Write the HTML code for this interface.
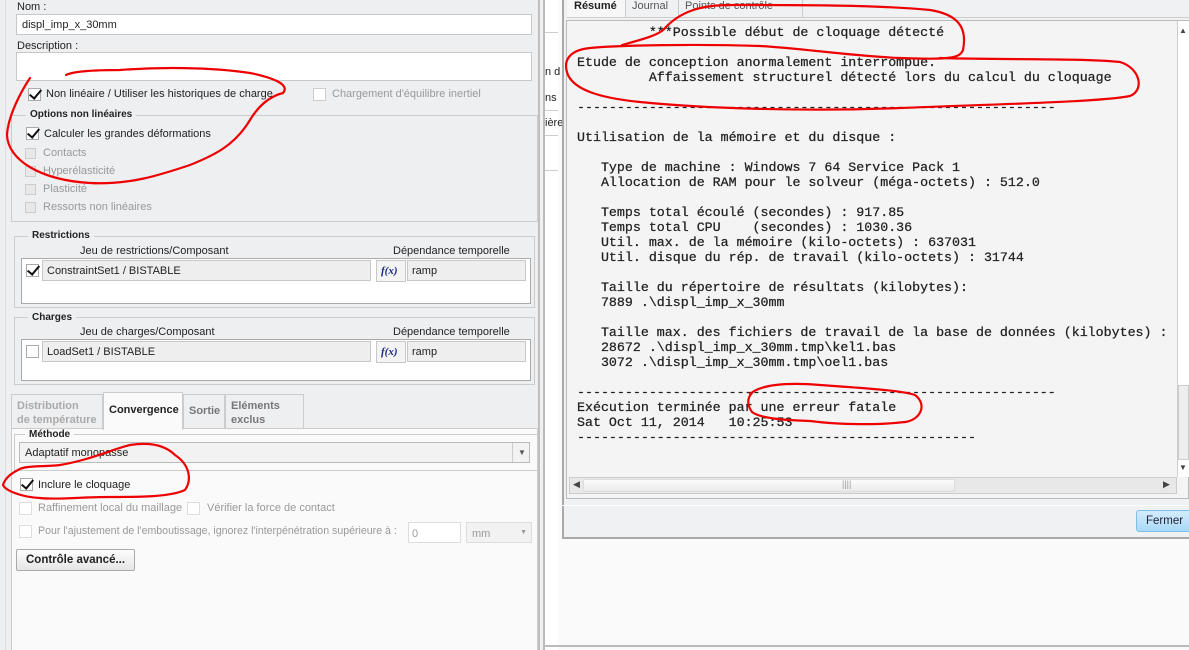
<!DOCTYPE html>
<html><head><meta charset="utf-8"><style>
*{margin:0;padding:0;box-sizing:border-box}
body{width:1189px;height:650px;overflow:hidden;background:#f0f0f0;position:relative;font-family:"Liberation Sans",sans-serif;font-size:11px;color:#222}
.a{position:absolute;white-space:nowrap}
.inp{position:absolute;background:#fff;border:1px solid #c8c8c8;white-space:nowrap}
.cb{position:absolute;width:13px;height:13px;border:1px solid #aaa;background:#fff}
.cbd{position:absolute;width:11px;height:11px;border:1px solid #ccc;background:#e8e8e8}
.chk::after{content:"";position:absolute;left:3px;top:-2px;width:5px;height:10px;border:solid #111;border-width:0 2.5px 2.5px 0;transform:rotate(40deg)}
.grp{position:absolute;border:1px solid #ccc}
.lg{position:absolute;background:#eeeff1;padding:0 4px;font-weight:bold;font-size:10px}
.dis{color:#999}
.mono{font-family:"Liberation Mono",monospace;font-size:13.3px;line-height:15px;color:#222;white-space:pre;position:absolute;left:577px;top:25px;-webkit-text-stroke:0.25px #222}
</style></head><body>
<div class="a" style="left:0;top:0;width:540px;height:650px;background:#eeeff1;border-right:2px solid #c0c0c0"></div>
<div class="a" style="left:5px;top:0;width:1px;height:650px;background:#ddd"></div>
<div class="a" style="left:17px;top:1px">Nom :</div>
<div class="inp" style="left:16px;top:14px;width:516px;height:21px;padding:4px 5px">displ_imp_x_30mm</div>
<div class="a" style="left:17px;top:40px">Description :</div>
<div class="inp" style="left:16px;top:52px;width:516px;height:29px"></div>
<div class="cb chk" style="left:28px;top:88px"></div>
<div class="a" style="left:46px;top:88px">Non linéaire / Utiliser les historiques de charge</div>
<div class="cb" style="left:313px;top:88px;border-color:#ccc"></div>
<div class="a dis" style="left:332px;top:88px">Chargement d'équilibre inertiel</div>
<div class="grp" style="left:11px;top:115px;width:527px;height:107px"></div>
<div class="lg" style="left:26px;top:109px">Options non linéaires</div>
<div class="cb chk" style="left:26px;top:127px"></div>
<div class="a" style="left:44px;top:128px">Calculer les grandes déformations</div>
<div class="cbd" style="left:25px;top:148px"></div><div class="a dis" style="left:43px;top:147px">Contacts</div>
<div class="cbd" style="left:25px;top:166px"></div><div class="a dis" style="left:43px;top:165px">Hyperélasticité</div>
<div class="cbd" style="left:25px;top:184px"></div><div class="a dis" style="left:43px;top:183px">Plasticité</div>
<div class="cbd" style="left:25px;top:202px"></div><div class="a dis" style="left:43px;top:201px">Ressorts non linéaires</div>

<div class="grp" style="left:14px;top:236px;width:521px;height:72px"></div>
<div class="lg" style="left:28px;top:230px">Restrictions</div>
<div class="a" style="left:80px;top:245px">Jeu de restrictions/Composant</div>
<div class="a" style="left:393px;top:245px">Dépendance temporelle</div>
<div class="inp" style="left:21px;top:258px;width:510px;height:46px;border-color:#aaa"></div>
<div class="cb chk" style="left:26px;top:264px"></div>
<div class="inp" style="left:42px;top:260px;width:329px;height:21px;background:#eee;padding:4px 4px">ConstraintSet1 / BISTABLE</div>
<div class="inp" style="left:376px;top:260px;width:30px;height:22px;background:#f4f4f4;font:italic bold 11px 'Liberation Serif',serif;color:#1a2a8a;padding:4px 4px">f(x)</div>
<div class="inp" style="left:407px;top:260px;width:119px;height:21px;background:#eee;padding:4px 4px">ramp</div>

<div class="grp" style="left:14px;top:317px;width:521px;height:68px"></div>
<div class="lg" style="left:28px;top:312px">Charges</div>
<div class="a" style="left:80px;top:326px">Jeu de charges/Composant</div>
<div class="a" style="left:393px;top:326px">Dépendance temporelle</div>
<div class="inp" style="left:21px;top:339px;width:510px;height:42px;border-color:#aaa"></div>
<div class="cb" style="left:26px;top:345px"></div>
<div class="inp" style="left:42px;top:341px;width:329px;height:21px;background:#eee;padding:4px 4px">LoadSet1 / BISTABLE</div>
<div class="inp" style="left:376px;top:341px;width:30px;height:22px;background:#f4f4f4;font:italic bold 11px 'Liberation Serif',serif;color:#1a2a8a;padding:4px 4px">f(x)</div>
<div class="inp" style="left:407px;top:341px;width:119px;height:21px;background:#eee;padding:4px 4px">ramp</div>

<div class="a" style="left:11px;top:428px;width:527px;height:222px;background:#fafafa;border:1px solid #ccc;border-bottom:none"></div>
<div class="a" style="left:11px;top:394px;width:92px;height:35px;border:1px solid #ccc;color:#aaa;font-weight:bold;padding:4px 5px;line-height:14px;font-size:11px">Distribution<br>de température</div>
<div class="a" style="left:103px;top:392px;width:80px;height:38px;background:#fafafa;border:1px solid #ccc;border-bottom:none;font-weight:bold;padding:11px 5px;font-size:11px">Convergence</div>
<div class="a" style="left:183px;top:394px;width:42px;height:35px;border:1px solid #ccc;color:#777;font-weight:bold;padding:10px 5px">Sortie</div>
<div class="a" style="left:225px;top:394px;width:79px;height:35px;border:1px solid #ccc;color:#777;font-weight:bold;padding:4px 5px;line-height:14px">Eléments<br>exclus</div>
<div class="grp" style="left:14px;top:434px;width:524px;height:37px"></div>
<div class="lg" style="left:25px;top:429px;background:#fafafa;font-size:10px">Méthode</div>
<div class="inp" style="left:19px;top:442px;width:511px;height:21px;background:#f2f2f2;border-color:#bbb;padding:4px 5px">Adaptatif monopasse</div>
<div class="a" style="left:512px;top:443px;width:18px;height:19px;border-left:1px solid #ccc;color:#555;font-size:8px;padding:5px 5px">▼</div>
<div class="cb chk" style="left:20px;top:478px"></div>
<div class="a" style="left:38px;top:479px">Inclure le cloquage</div>
<div class="cb" style="left:19px;top:502px;border-color:#ddd"></div><div class="a dis" style="left:38px;top:502px">Raffinement local du maillage</div>
<div class="cb" style="left:187px;top:502px;border-color:#ddd"></div><div class="a dis" style="left:207px;top:502px">Vérifier la force de contact</div>
<div class="cb" style="left:19px;top:525px;border-color:#ddd"></div><div class="a dis" style="left:38px;top:525px;font-size:10.6px">Pour l'ajustement de l'emboutissage, ignorez l'interpénétration supérieure à :</div>
<div class="inp" style="left:408px;top:522px;width:53px;height:21px;padding:5px 3px;color:#999;border-color:#ddd">0</div>
<div class="inp" style="left:466px;top:522px;width:66px;height:21px;padding:5px 5px;color:#999;background:#f2f2f2;border-color:#ddd">mm<span style="position:absolute;right:4px;top:6px;font-size:7px">▼</span></div>
<div class="a" style="left:16px;top:549px;width:119px;height:22px;border:1px solid #aaa;border-radius:2px;background:linear-gradient(#fdfdfd,#e6e6e6);font-weight:bold;padding:4px 9px;font-size:11.5px">Contrôle avancé...</div>

<div class="a" style="left:543px;top:0;width:646px;height:650px;background:#fafafa;border-left:2px solid #bbb"></div>
<div class="a" style="left:545px;top:0;width:13px;height:650px;background:#fff"></div>
<div class="a" style="left:545px;top:32px;width:13px;height:1px;background:#ccc"></div>
<div class="a" style="left:545px;top:110px;width:13px;height:1px;background:#ccc"></div>
<div class="a" style="left:545px;top:135px;width:13px;height:1px;background:#ccc"></div>
<div class="a" style="left:545px;top:170px;width:13px;height:1px;background:#ccc"></div>
<div class="a" style="left:545px;top:66px;font-size:11px">n d</div>
<div class="a" style="left:545px;top:92px;font-size:11px">ns</div>
<div class="a" style="left:545px;top:117px;font-size:11px">ière</div>
<div class="a" style="left:543px;top:645px;width:646px;height:2px;background:#bbb"></div>
<div class="a" style="left:562px;top:0;width:627px;height:539px;background:#f0f1f3;border:2px solid #a9a9a9;border-top:none;border-right:none"></div>
<div class="a" style="left:567px;top:0;width:59px;height:17px;background:#f7f7f7;border-right:1px solid #ccc;font-weight:bold;padding:0 7px;font-size:11px">Résumé</div>
<div class="a" style="left:626px;top:0;width:53px;height:17px;border-right:1px solid #ccc;color:#555;padding:0 6px">Journal</div>
<div class="a" style="left:679px;top:0;width:124px;height:17px;border-right:1px solid #ccc;color:#555;padding:0 6px">Points de contrôle</div>
<div class="a" style="left:567px;top:17px;width:622px;height:1px;background:#ccc"></div>
<div class="a" style="left:566px;top:20px;width:623px;height:479px;background:#f4f4f4;border:1px solid #bbb"></div>
<div class="a" style="left:1177px;top:21px;width:12px;height:456px;background:#fff;border-left:1px solid #ccc"></div>
<div class="a" style="left:1179px;top:26px;font-size:8px;color:#444">▲</div>
<div class="a" style="left:1179px;top:463px;font-size:8px;color:#444">▼</div>
<div class="a" style="left:1178px;top:385px;width:11px;height:75px;background:#eee;border:1px solid #ccc"></div>
<div class="a" style="left:569px;top:477px;width:608px;height:17px;background:#e8e8e8;border:1px solid #ccc"></div>
<div class="a" style="left:573px;top:479px;font-size:9px;color:#444">◀</div>
<div class="a" style="left:1163px;top:479px;font-size:9px;color:#444">▶</div>
<div class="a" style="left:583px;top:479px;width:372px;height:13px;background:linear-gradient(#fcfcfc,#eaeaea);border:1px solid #ddd"></div>
<div class="a" style="left:842px;top:479px;font-size:9px;color:#999">||||</div>
<div class="a" style="left:562px;top:505px;width:627px;height:1px;background:#fff"></div>
<div class="a" style="left:1136px;top:510px;width:60px;height:22px;background:linear-gradient(#d3ecfb,#a9d9f7);border:1px solid #7cc0ea;border-radius:3px;padding:4px 9px;font-size:11.5px;color:#223">Fermer</div>
<div class="mono">         ***Possible début de cloquage détecté

Etude de conception anormalement interrompue.
         Affaissement structurel détecté lors du calcul du cloquage

------------------------------------------------------------

Utilisation de la mémoire et du disque :

   Type de machine : Windows 7 64 Service Pack 1
   Allocation de RAM pour le solveur (méga-octets) : 512.0

   Temps total écoulé (secondes) : 917.85
   Temps total CPU    (secondes) : 1030.36
   Util. max. de la mémoire (kilo-octets) : 637031
   Util. disque du rép. de travail (kilo-octets) : 31744

   Taille du répertoire de résultats (kilobytes):
   7889 .\displ_imp_x_30mm

   Taille max. des fichiers de travail de la base de données (kilobytes) :
   28672 .\displ_imp_x_30mm.tmp\kel1.bas
   3072 .\displ_imp_x_30mm.tmp\oel1.bas

------------------------------------------------------------
Exécution terminée par une erreur fatale
Sat Oct 11, 2014   10:25:53
--------------------------------------------------</div>

<svg class="a" style="left:0;top:0" width="1189" height="650" fill="none" stroke="#e00" stroke-width="2.2" stroke-linecap="round">
<path d="M30 78 C22 90 8 115 7 135 C8 160 40 180 90 183 C130 185 160 175 190 165 C215 155 235 145 250 120 C262 100 275 95 283 93 C290 85 275 78 250 73 C210 67 160 67 120 70 C90 70 72 72 66 75"/>
<path d="M622 45 C640 40 660 35 665 28 C680 12 700 5 730 5 C800 5 880 5 930 10 C955 14 968 25 963 50 C960 58 950 60 900 58 C850 56 800 48 760 46 C700 44 620 45 590 48 C570 50 562 60 568 75 C575 90 600 98 640 102 C700 108 800 112 900 108 C1000 104 1100 102 1130 96 C1145 90 1140 68 1120 62 C1080 58 1000 60 940 58"/>
<path d="M750 394 C760 385 785 382 820 385 C860 388 900 390 915 395 C928 405 920 420 905 422 C880 425 840 425 810 421 C780 420 760 418 752 412 C747 405 747 398 752 393"/>
<path d="M18 470 C25 465 45 467 60 465 C90 460 110 450 130 445 C150 442 165 445 175 455 C190 465 192 480 185 490 C170 497 140 497 110 497 C80 497 55 500 40 498 C20 497 5 490 3 485 C5 478 12 473 18 470"/>
</svg>
</body></html>
